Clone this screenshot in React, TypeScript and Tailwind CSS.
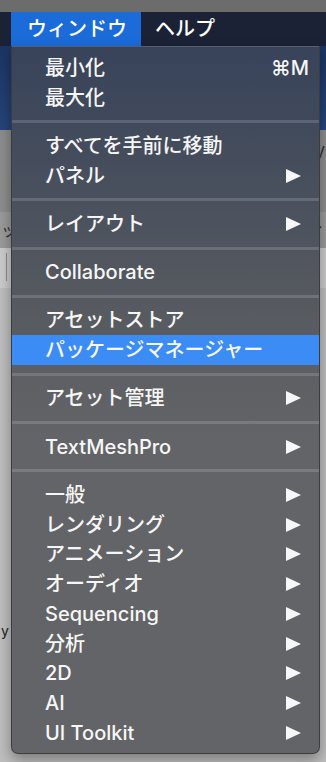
import React from 'react';

type Item = { label: string; sub?: boolean; shortcut?: string; active?: boolean };

const groups: Item[][] = [
  [{ label: '最小化', shortcut: '⌘M' }, { label: '最大化' }],
  [{ label: 'すべてを手前に移動' }, { label: 'パネル', sub: true }],
  [{ label: 'レイアウト', sub: true }],
  [{ label: 'Collaborate' }],
  [{ label: 'アセットストア' }, { label: 'パッケージマネージャー', active: true }],
  [{ label: 'アセット管理', sub: true }],
  [{ label: 'TextMeshPro', sub: true }],
  [
    { label: '一般', sub: true },
    { label: 'レンダリング', sub: true },
    { label: 'アニメーション', sub: true },
    { label: 'オーディオ', sub: true },
    { label: 'Sequencing', sub: true },
    { label: '分析', sub: true },
    { label: '2D', sub: true },
    { label: 'AI', sub: true },
    { label: 'UI Toolkit', sub: true },
  ],
];

function Arrow() {
  return (
    <svg width="15" height="14" viewBox="0 0 15 14" className="shrink-0">
      <polygon points="0,0 15,7 0,14" fill="#f7f7f7" />
    </svg>
  );
}

function MenuRow({ item }: { item: Item }) {
  return (
    <div
      className={`flex items-center justify-between h-[29.75px] pl-[33px] pr-[18px] ${
        item.active ? 'bg-[#3b8cf5]' : ''
      }`}
    >
      <span className="text-[20px] font-medium leading-none text-[#f6f6f6] whitespace-nowrap">{item.label}</span>
      {item.sub && <Arrow />}
      {item.shortcut && (
        <span className="text-[20px] font-medium leading-none text-[#f6f6f6] -mr-[8px]">{item.shortcut}</span>
      )}
    </div>
  );
}

function Separator() {
  return (
    <div className="flex items-center h-[18.5px]">
      <div className="h-[3px] w-full bg-white/15" />
    </div>
  );
}

export default function App() {
  return (
    <div
      className="relative w-[326px] h-[762px] overflow-hidden bg-[#bdbdbd]"
      style={{ fontFamily: 'Inter, "Noto Sans CJK JP", sans-serif' }}
    >
      {/* what sits behind the menu */}
      <div className="flex flex-col">
        <div className="h-[12px] bg-[#6c6c6c]" />
        <div className="h-[34px] bg-[#1b2236] flex items-stretch">
          <div className="ml-[11px] w-[130px] bg-[#1b6bd9] flex items-center pl-[16px]">
            <span className="text-[20px] font-medium leading-none text-white">ウィンドウ</span>
          </div>
          <div className="flex items-center pl-[14px]">
            <span className="text-[20px] font-medium leading-none text-white">ヘルプ</span>
          </div>
        </div>
        <div className="h-[84px] bg-linear-to-b from-[#1c3463] to-[#25457c]" />
        <div className="h-[82px] bg-[#8d8d8d] flex justify-end items-start text-[16px] text-[#2a2a2a]">
          <span className="mt-[10px] mr-[1px]">V</span>
        </div>
        <div className="h-[36px] bg-[#9a9a9a] flex justify-between items-center text-[16px] text-[#333]">
          <span className="ml-[1px]">ッ</span>
          <span className="mr-[1px]">ィ</span>
        </div>
        <div className="h-[40px] bg-[#cbcbcb] flex items-start">
          <div className="ml-[6px] mt-[5px] w-px h-[28px] bg-[#8a8a8a]" />
        </div>
        <div className="h-[474px] bg-[#bebebe] flex items-start">
          <span className="mt-[332px] ml-[1px] text-[14px] text-[#222]">y ⋮</span>
        </div>
      </div>

      {/* dropdown menu */}
      <div className="absolute left-[11px] top-[46px] w-[309px] h-[708px] rounded-b-[7px] border border-t-0 border-[#3c3c3e] bg-linear-to-b from-[#38435a] via-[#55595f] via-35% to-[#636467] to-55% shadow-[0_6px_14px_rgba(0,0,0,0.35)]">
        <div className="border-t border-[#56606f] pt-[6px]">
          {groups.map((g, gi) => (
            <div key={gi}>
              {gi > 0 && <Separator />}
              {g.map((item) => (
                <MenuRow key={item.label} item={item} />
              ))}
            </div>
          ))}
        </div>
      </div>
    </div>
  );
}
